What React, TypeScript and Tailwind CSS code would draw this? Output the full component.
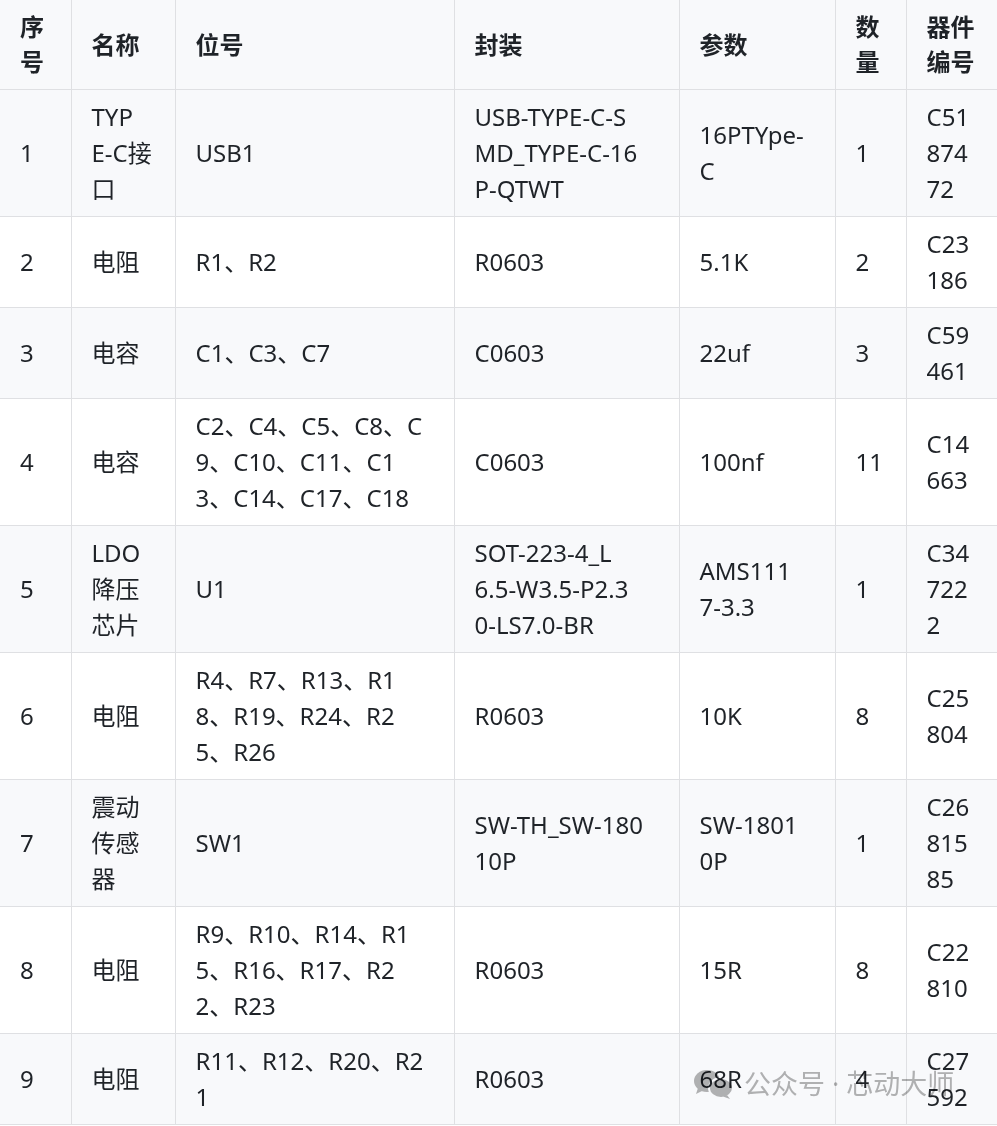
import React from "react";

const rows: string[][][] = [
  [["1"], ["TYP", "E-C接", "口"], ["USB1"], ["USB-TYPE-C-S", "MD_TYPE-C-16", "P-QTWT"], ["16PTYpe-", "C"], ["1"], ["C51", "874", "72"]],
  [["2"], ["电阻"], ["R1、R2"], ["R0603"], ["5.1K"], ["2"], ["C23", "186"]],
  [["3"], ["电容"], ["C1、C3、C7"], ["C0603"], ["22uf"], ["3"], ["C59", "461"]],
  [["4"], ["电容"], ["C2、C4、C5、C8、C", "9、C10、C11、C1", "3、C14、C17、C18"], ["C0603"], ["100nf"], ["11"], ["C14", "663"]],
  [["5"], ["LDO", "降压", "芯片"], ["U1"], ["SOT-223-4_L", "6.5-W3.5-P2.3", "0-LS7.0-BR"], ["AMS111", "7-3.3"], ["1"], ["C34", "722", "2"]],
  [["6"], ["电阻"], ["R4、R7、R13、R1", "8、R19、R24、R2", "5、R26"], ["R0603"], ["10K"], ["8"], ["C25", "804"]],
  [["7"], ["震动", "传感", "器"], ["SW1"], ["SW-TH_SW-180", "10P"], ["SW-1801", "0P"], ["1"], ["C26", "815", "85"]],
  [["8"], ["电阻"], ["R9、R10、R14、R1", "5、R16、R17、R2", "2、R23"], ["R0603"], ["15R"], ["8"], ["C22", "810"]],
  [["9"], ["电阻"], ["R11、R12、R20、R2", "1"], ["R0603"], ["68R"], ["4"], ["C27", "592"]],
];

const headers: string[][] = [["序", "号"], ["名称"], ["位号"], ["封装"], ["参数"], ["数", "量"], ["器件", "编号"]];
const widths = [71, 104, 279, 225, 156, 71, 91];

function Lines({ l }: { l: string[] }) {
  return (
    <>
      {l.map((s, i) => (
        <React.Fragment key={i}>
          {i > 0 && <br />}
          {s}
        </React.Fragment>
      ))}
    </>
  );
}

export default function App() {
  return (
    <div
      className="relative w-[997px] h-[1126px] overflow-hidden bg-white text-[#1f2328]"
      style={{ fontFamily: '"Noto Sans", "Noto Sans CJK SC", sans-serif' }}
    >
      <table className="table-fixed border-collapse w-[997px] text-[24px]">
        <colgroup>
          {widths.map((w, i) => (
            <col key={i} style={{ width: w }} />
          ))}
        </colgroup>
        <thead>
          <tr className="bg-[#f8f9fb]">
            {headers.map((h, i) => (
              <th
                key={i}
                className="border border-t-0 border-[#dfe0e3] first:border-l-0 last:border-r-0 pl-[20px] pr-[8px] pt-[9px] pb-[10px] text-left align-middle font-bold leading-[35px] whitespace-nowrap"
              >
                <Lines l={h} />
              </th>
            ))}
          </tr>
        </thead>
        <tbody>
          {rows.map((r, ri) => (
            <tr key={ri} className={ri % 2 === 0 ? "bg-[#f8f9fb]" : "bg-white"}>
              {r.map((c, ci) => (
                <td
                  key={ci}
                  className="border border-[#dfe0e3] first:border-l-0 last:border-r-0 pl-[20px] pr-[8px] py-[9px] align-middle leading-[36px] whitespace-nowrap"
                >
                  <Lines l={c} />
                </td>
              ))}
            </tr>
          ))}
        </tbody>
      </table>
      <div className="absolute left-[693px] top-[1066px] flex items-center gap-[9px] text-[27px] leading-[36px] text-[#b4b4b4] mix-blend-multiply pointer-events-none">
        <svg width="42" height="32" viewBox="0 0 42 32">
          <ellipse cx="14" cy="13" rx="13" ry="11" fill="#b4b4b4" />
          <path d="M5 20 L3 26 L11 22 Z" fill="#b4b4b4" />
          <ellipse cx="28" cy="20" rx="13" ry="11" fill="#ffffff" />
          <ellipse cx="28" cy="20" rx="11" ry="9" fill="#b4b4b4" />
          <path d="M34 27 L37 31 L30 28.5 Z" fill="#b4b4b4" />
        </svg>
        <span>公众号 · 芯动大师</span>
      </div>
    </div>
  );
}
